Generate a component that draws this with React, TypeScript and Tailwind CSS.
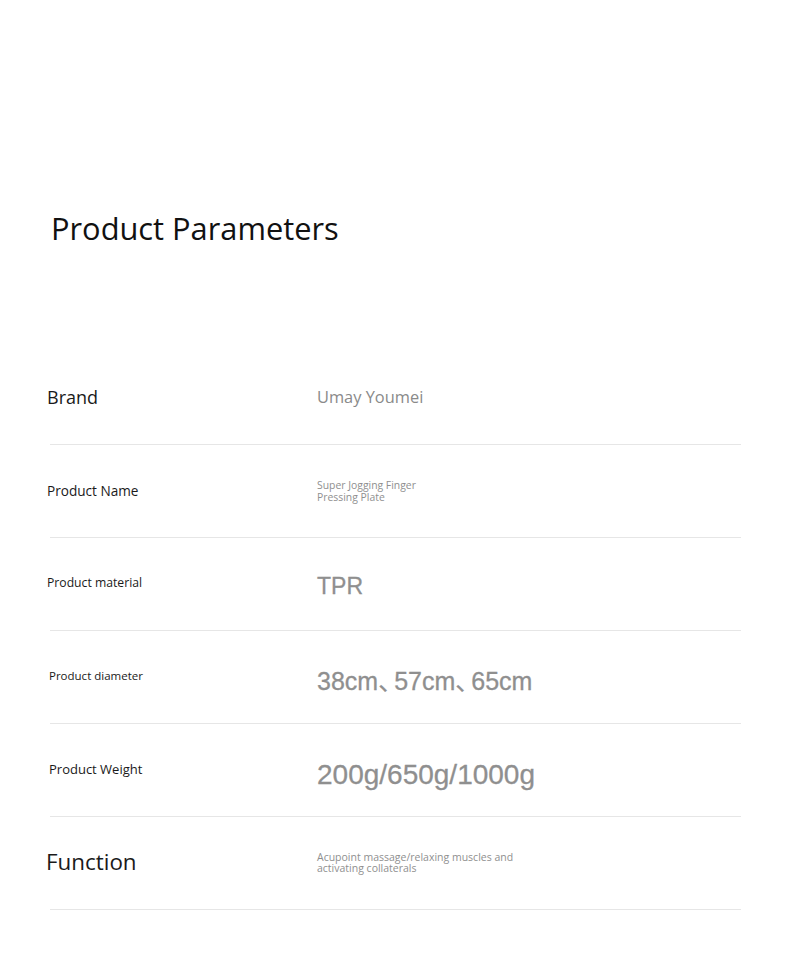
import React from "react";

interface Param {
  label: string;
  labelClass: string;
  value: React.ReactNode;
  valueClass: string;
}

// the enumeration comma sits tight against the numbers in the picture
const Dun = () => <span className="tracking-[-9px]">、</span>;

const params: Param[] = [
  {
    label: "Brand",
    labelClass: "pl-[47px] text-[18px] -mt-[2px]",
    value: "Umay Youmei",
    valueClass: "text-[16.4px] -mt-[1px] text-[#8a8a8a] font-['Open_Sans',sans-serif]",
  },
  {
    label: "Product Name",
    labelClass: "pl-[47px] text-[13.6px] -mt-[2px]",
    value: "Super Jogging Finger\nPressing Plate",
    valueClass:
      "text-[10.4px] leading-[12px] text-[#8f8f8f] font-['Open_Sans',sans-serif] whitespace-pre-line",
  },
  {
    label: "Product material",
    labelClass: "pl-[47px] text-[12.2px] -mt-[2px]",
    value: "TPR",
    valueClass:
      "text-[23px] mt-[5px] text-[#8f8f8f] font-['Liberation_Sans',Arial,sans-serif] [-webkit-text-stroke:0.3px_#8f8f8f]",
  },
  {
    label: "Product diameter",
    labelClass: "pl-[49px] text-[11.5px] -mt-[2px]",
    value: (
      <>
        38cm
        <Dun />
        57cm
        <Dun />
        65cm
      </>
    ),
    valueClass:
      "text-[25px] mt-[9px] text-[#8f8f8f] font-['Liberation_Sans','Noto_Sans_CJK_SC',sans-serif] [-webkit-text-stroke:0.3px_#8f8f8f] whitespace-nowrap",
  },
  {
    label: "Product Weight",
    labelClass: "pl-[49px] text-[13px] -mt-[2px]",
    value: "200g/650g/1000g",
    valueClass:
      "text-[28px] mt-[9px] text-[#8f8f8f] font-['Liberation_Sans',Arial,sans-serif] [-webkit-text-stroke:0.3px_#8f8f8f]",
  },
  {
    label: "Function",
    labelClass: "pl-[46px] text-[22.4px] -mt-[2px]",
    value: "Acupoint massage/relaxing muscles and\nactivating collaterals",
    valueClass:
      "text-[10.5px] leading-[11.5px] text-[#8f8f8f] font-['Open_Sans',sans-serif] whitespace-pre-line",
  },
];

const App = () => {
  return (
    <div className="w-[790px] h-[976px] bg-white font-['Open_Sans',sans-serif] text-[#1a1a1a]">
      <div className="h-[208px]" />
      <h1 className="pl-[51px] h-[40px] text-[30.8px] leading-[40px] font-normal text-[#111]">
        Product Parameters
      </h1>
      <div className="h-[104px]" />

      <div className="flex flex-col">
        {params.map((p) => (
          <div key={p.label}>
            <div className="flex items-center h-[92px]">
              <div className={`w-[317px] shrink-0 leading-tight ${p.labelClass}`}>
                {p.label}
              </div>
              <div className={p.valueClass}>{p.value}</div>
            </div>
            <div className="ml-[50px] w-[691px] h-px bg-[#e6e6e6]" />
          </div>
        ))}
      </div>
    </div>
  );
};

export default App;
